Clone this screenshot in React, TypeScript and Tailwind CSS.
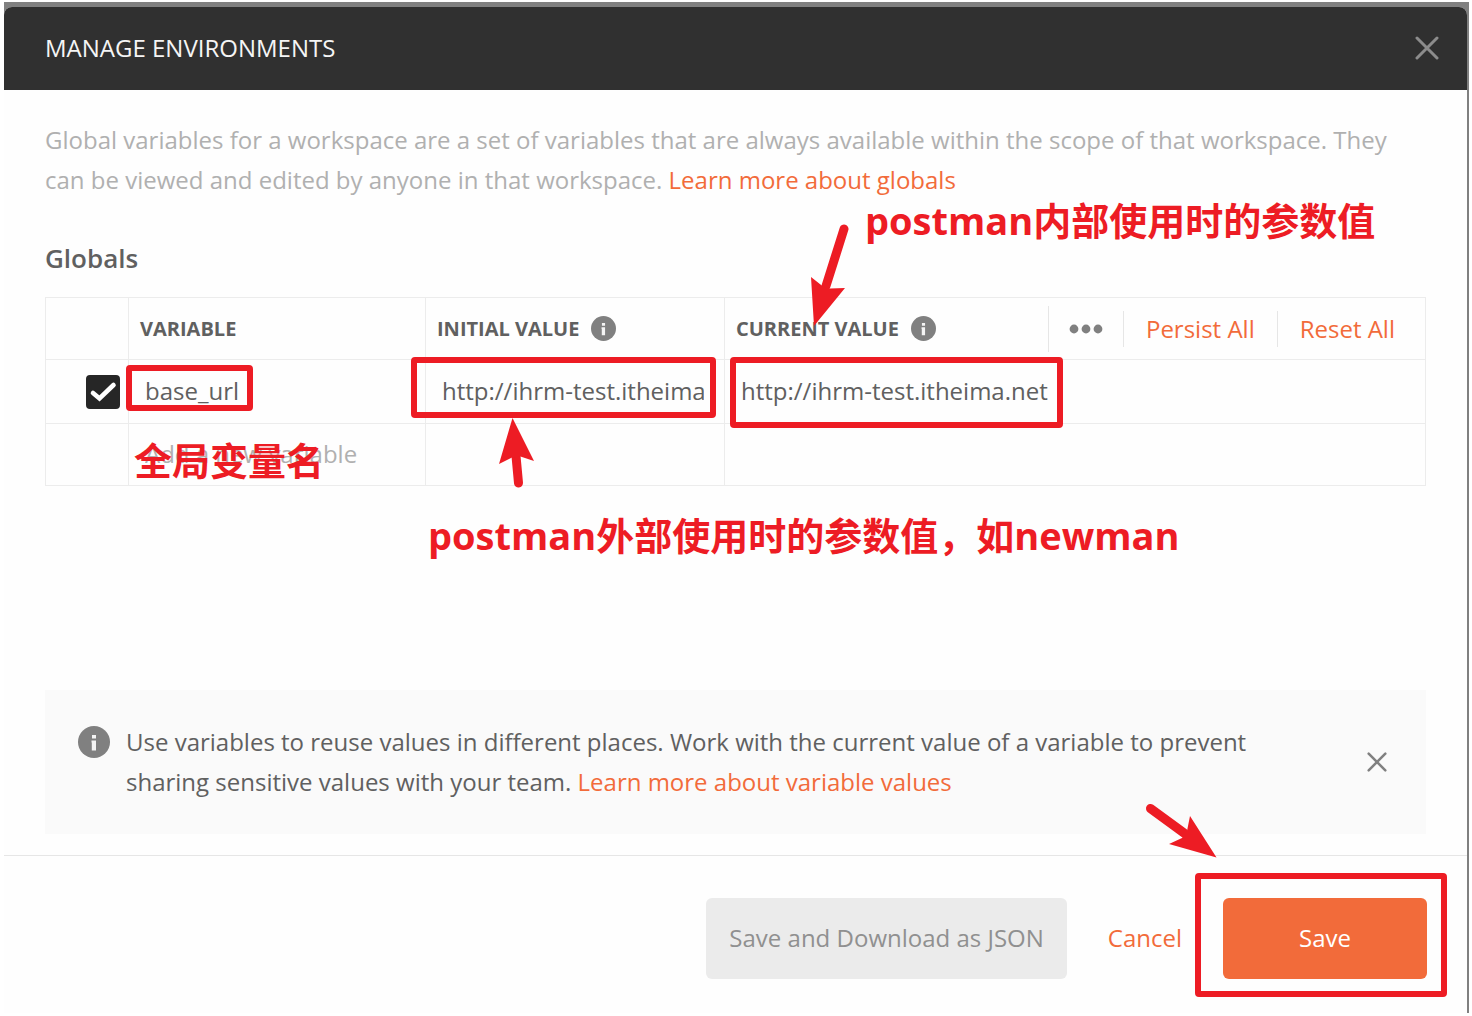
import { useState } from 'react'
import { clsx } from 'clsx'

const CloseIcon = ({ className = '' }: { className?: string }) => (
  <svg viewBox="0 0 24 24" fill="none" stroke="currentColor" strokeLinecap="round" className={className} aria-hidden="true">
    <path d="M2 2L22 22M22 2L2 22" />
  </svg>
)

const InfoIcon = ({ className = '' }: { className?: string }) => (
  <svg viewBox="0 0 32 32" className={clsx('shrink-0 text-[#808080]', className)} aria-hidden="true">
    <circle cx="16" cy="16" r="16" fill="currentColor" />
    <path d="M14 9h4v3.5h-4zM13.500 14.500h4.500v10h-4.200v-8h-.3z" fill="#f4f4f4" />
  </svg>
)

const DotsIcon = () => (
  <svg viewBox="0 0 34 10" className="w-[34px] h-[10px]" fill="#808080" aria-hidden="true">
    <circle cx="5" cy="5" r="4.4" />
    <circle cx="17" cy="5" r="4.4" />
    <circle cx="29" cy="5" r="4.4" />
  </svg>
)

// Red frame drawn over a control
const Frame = ({ className }: { className: string }) => (
  <div className={clsx('absolute border-[6px] border-[#ed1c24] rounded-sm pointer-events-none', className)}></div>
)

// Arrow with a round tail and a notched head
const Arrow = ({ head, shaft, className }: { head: string, shaft: string, className: string }) => (
  <svg className={clsx('absolute overflow-visible pointer-events-none', className)} aria-hidden="true">
    <path d={shaft} stroke="#ed1c24" strokeWidth="9" strokeLinecap="round" />
    <path d={head} fill="#ed1c24" />
  </svg>
)

const Note = ({ children, className }: { children: React.ReactNode, className: string }) => (
  <p
    className={clsx(
      'absolute text-[38px] leading-[56px] font-bold text-[#ed1c24] whitespace-nowrap pointer-events-none',
      className
    )}
  >
    {children}
  </p>
)

const cell = 'border border-[#ececec] p-0 text-left'
const inputCell = 'border border-[#ececec] pl-4 pr-5 pt-0 pb-[2px] text-left'
const field = 'block w-full bg-transparent text-[#606060] placeholder:text-[#b0b0b0] outline-none'

export default function App() {
  const [enabled, setEnabled] = useState(true)
  const [name, setName] = useState('base_url')
  const [initial, setInitial] = useState('http://ihrm-test.itheima.net')
  const [current, setCurrent] = useState('http://ihrm-test.itheima.net')

  return (
    <div className="min-h-screen flex flex-col bg-white pt-[2px] pb-[3px] pl-1 pr-[3px] font-['Open_Sans','Noto_Sans_CJK_SC',sans-serif] text-2xl">
      <div className="flex-1 flex flex-col bg-[#808080] pt-[5px] pr-[2px]">
        <section role="dialog" aria-labelledby="title" className="flex-1 flex flex-col bg-[#fefefe] rounded-t-lg">
          <header className="h-[83px] flex items-center justify-between pl-[41px] pr-[28px] pb-[2px] bg-[#303030] rounded-t-lg">
            <h1 id="title" className="text-[#f5f5f5]">MANAGE ENVIRONMENTS</h1>
            <button type="button" aria-label="Close" className="text-[#8c8c8c]">
              <CloseIcon className="size-6 stroke-[3]" />
            </button>
          </header>

          <div className="flex-1 flex flex-col px-[41px] pt-[30px] pb-[21px]">
            <p className="leading-10 text-[#b0b0b0]">
              Global variables for a workspace are a set of variables that are always available within the scope of that
              workspace. They can be viewed and edited by anyone in that workspace.{' '}
              <a href="#globals" className="text-[#f26b3a]">Learn more about globals</a>
            </p>
            <h2 className="mt-[38px] mb-[19px] leading-10 text-[26px] font-semibold text-[#606060]">Globals</h2>

            <div className="relative">
              <table className="w-full table-fixed border-collapse">
                <colgroup>
                  <col className="w-[83px]" />
                  <col className="w-[297px]" />
                  <col className="w-[299px]" />
                  <col />
                </colgroup>
                <thead>
                  <tr className="h-[62px] text-xl text-[#606060]">
                    <td className={cell}></td>
                    <th className={cell}>
                      <span className="block pl-[11px]">VARIABLE</span>
                    </th>
                    <th className={cell}>
                      <span className="flex items-center gap-3 pl-[11px]">
                        INITIAL VALUE <InfoIcon className="size-[25px]" />
                      </span>
                    </th>
                    <th className={cell}>
                      <div className="flex items-center justify-between pl-[11px] pr-2">
                        <span className="flex items-center gap-3">
                          CURRENT VALUE <InfoIcon className="size-[25px]" />
                        </span>
                        <div className="flex items-center text-2xl font-normal text-[#f26b3a]">
                          <div className="h-[46px] flex items-center px-5 border-l border-[#e6e6e6]">
                            <button type="button" aria-label="More options">
                              <DotsIcon />
                            </button>
                          </div>
                          <div className="h-9 flex items-center px-[22px] border-l border-[#e6e6e6]">
                            <button type="button">Persist All</button>
                          </div>
                          <div className="h-9 flex items-center px-[22px] border-l border-[#e6e6e6]">
                            <button type="button">Reset All</button>
                          </div>
                        </div>
                      </div>
                    </th>
                  </tr>
                </thead>
                <tbody>
                  <tr className="h-16">
                    <td className={cell}>
                      <div className="relative size-[34px] ml-auto mr-2">
                        <input
                          type="checkbox"
                          aria-label="Enable base_url"
                          checked={enabled}
                          onChange={(e) => setEnabled(e.target.checked)}
                          className="block size-full appearance-none rounded border-2 border-[#262626] checked:bg-[#262626]"
                        />
                        {enabled && (
                          <svg viewBox="0 0 34 34" className="absolute inset-0 pointer-events-none" fill="none" aria-hidden="true">
                            <path d="M7 18L13.500 23.500L27.500 10" stroke="#fff" strokeWidth="4.6" strokeLinecap="round" />
                          </svg>
                        )}
                      </div>
                    </td>
                    <td className={inputCell}>
                      <input aria-label="Variable" className={field} value={name} onChange={(e) => setName(e.target.value)} />
                    </td>
                    <td className={inputCell}>
                      <input aria-label="Initial value" className={field} value={initial} onChange={(e) => setInitial(e.target.value)} />
                    </td>
                    <td className={inputCell}>
                      <input aria-label="Current value" className={field} value={current} onChange={(e) => setCurrent(e.target.value)} />
                    </td>
                  </tr>
                  <tr className="h-[62px]">
                    <td className={cell}></td>
                    <td className={inputCell}>
                      <input aria-label="New variable" className={field} placeholder="Add a new variable" />
                    </td>
                    <td className={cell}></td>
                    <td className={cell}></td>
                  </tr>
                </tbody>
              </table>

              <Frame className="left-[81px] top-[68px] w-[127px] h-[46px]" />
              <Frame className="left-[366px] top-[60px] w-[305px] h-[61px]" />
              <Frame className="left-[685px] top-[60px] w-[333px] h-[71px]" />
              <Note className="left-[89px] top-[135px]">全局变量名</Note>
              <Note className="left-[820px] top-[-105px]">postman内部使用时的参数值</Note>
              <Note className="left-[383px] top-[210px]">postman外部使用时的参数值，如newman</Note>
              <Arrow
                className="left-[766px] top-[-73px] w-[36px] h-[102px]"
                shaft="M33 5L15 62"
                head="M3 102L0 53L12 62.5L19 64.5L34 64Z"
              />
              <Arrow
                className="left-[454px] top-[121px] w-[36px] h-[70px]"
                shaft="M19.500 65L17 38"
                head="M13.500 0L0 46L13 39.500L21.500 38.500L35 43Z"
              />
            </div>

            <aside className="mt-auto flex items-center justify-between gap-12 bg-[#fafafa] py-8 pl-[33px] pr-[39px]">
              <div className="flex items-start gap-4">
                <InfoIcon className="size-8 mt-1" />
                <p className="leading-10 text-[#606060]">
                  Use variables to reuse values in different places. Work with the current value of a variable to prevent
                  sharing sensitive values with your team.{' '}
                  <a href="#values" className="text-[#f26b3a]">Learn more about variable values</a>
                </p>
              </div>
              <button type="button" aria-label="Dismiss" className="text-[#808080]">
                <CloseIcon className="size-5 stroke-[3]" />
              </button>
            </aside>
          </div>

          <footer className="flex items-center justify-end border-t border-[#e6e6e6] pt-[42px] pb-[34px] px-10">
            <button type="button" className="h-[81px] px-[23px] pb-[2px] rounded-md bg-[#ebebeb] text-[#909090]">
              Save and Download as JSON
            </button>
            <button type="button" className="mx-[41px] pb-[2px] text-[#f26b3a]">Cancel</button>
            <div className="relative">
              <button type="button" className="block h-[81px] w-[204px] pb-[2px] rounded-md bg-[#f26b3a] text-white">
                Save
              </button>
              <Frame className="-left-7 -top-[25px] w-[252px] h-[124px]" />
              <Arrow
                className="-left-[77px] -top-[94px] w-[70px] h-[54px]"
                shaft="M4.500 4.500L38 29"
                head="M70.500 53.500L44 12L41 27L36 34L23 40Z"
              />
            </div>
          </footer>
        </section>
      </div>
    </div>
  )
}
